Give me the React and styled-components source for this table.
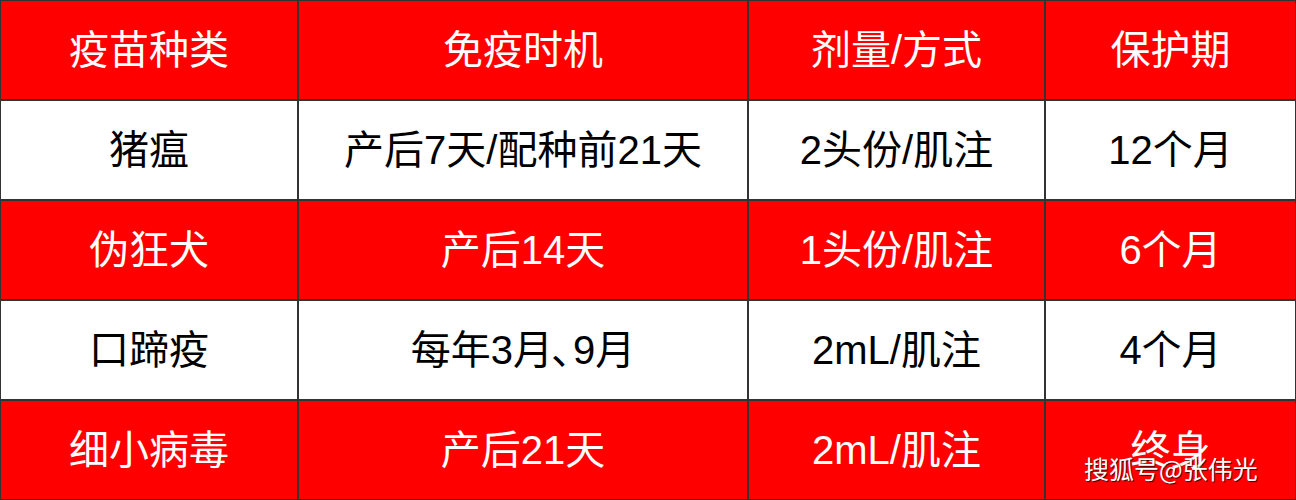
import React from "react";
import styled, { createGlobalStyle } from "styled-components";

const GlobalStyle = createGlobalStyle`
  html, body {
    margin: 0;
    padding: 0;
    background: #ffffff;
  }
  body {
    font-family: "Liberation Sans", "Noto Sans CJK SC", sans-serif;
  }
`;

const Wrap = styled.div`
  position: relative;
  width: 1296px;
  height: 500px;
`;

const Table = styled.div`
  display: grid;
  grid-template-columns: 296px 448px 295px 249px;
  grid-auto-rows: 98px;
  gap: 2px;
  padding: 1px;
  width: 1296px;
  height: 500px;
  box-sizing: border-box;
  background: #333333;
`;

const Cell = styled.div`
  display: flex;
  align-items: center;
  justify-content: center;
  background: ${(p) => (p.$red ? "#ff0000" : "#ffffff")};
  color: ${(p) => (p.$red ? "#ffffff" : "#000000")};
  font-size: 40px;
  line-height: 1;
  white-space: nowrap;
`;

// 顿号在原图里是半角宽度
const Comma = styled.span`
  letter-spacing: -18px;
  margin-left: -2px;
`;

const Watermark = styled.div`
  position: absolute;
  left: 1084px;
  top: 453px;
  font-family: "Noto Sans CJK SC", sans-serif;
  font-size: 25px;
  line-height: 1.2;
  color: #ffffff;
  text-shadow: 1px 1px 1px rgba(0, 0, 0, 0.75);
  white-space: nowrap;
`;

const header = ["疫苗种类", "免疫时机", "剂量/方式", "保护期"];

const rows = [
  ["猪瘟", "产后7天/配种前21天", "2头份/肌注", "12个月"],
  ["伪狂犬", "产后14天", "1头份/肌注", "6个月"],
  [
    "口蹄疫",
    <>
      每年3月<Comma>、</Comma>9月
    </>,
    "2mL/肌注",
    "4个月",
  ],
  ["细小病毒", "产后21天", "2mL/肌注", "终身"],
];

export default function App() {
  return (
    <>
      <GlobalStyle />
      <Wrap>
        <Table>
          {header.map((h) => (
            <Cell key={h} $red>
              {h}
            </Cell>
          ))}
          {rows.map((row, i) =>
            row.map((c, j) => (
              <Cell key={i + "-" + j} $red={i % 2 === 1}>
                {c}
              </Cell>
            ))
          )}
        </Table>
        <Watermark>搜狐号@张伟光</Watermark>
      </Wrap>
    </>
  );
}
